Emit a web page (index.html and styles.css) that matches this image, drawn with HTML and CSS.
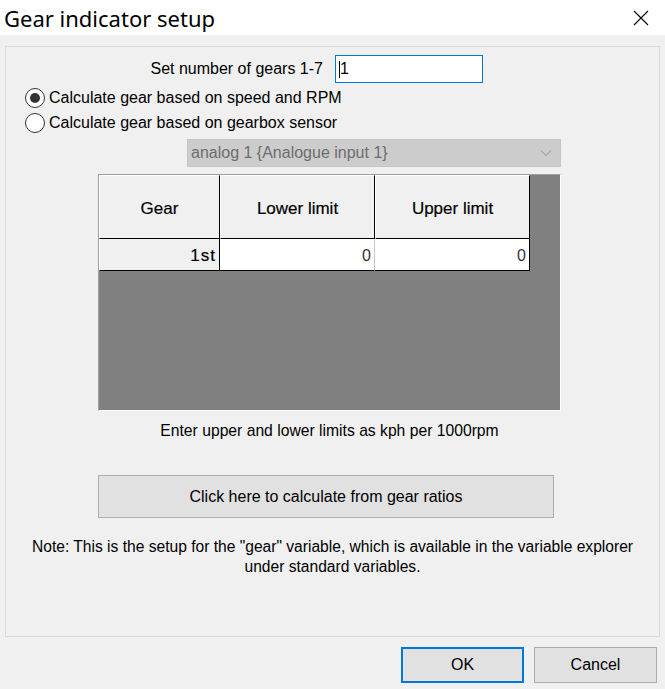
FILE: index.html
```html
<!DOCTYPE html>
<html>
<head>
<meta charset="utf-8">
<link rel="stylesheet" href="styles.css">
</head>
<body>
<div class="window">
  <div class="titlebar">
    <span class="title">Gear indicator setup</span>
    <svg class="close" width="16" height="16" viewBox="0 0 16 16"><path d="M1 1 L15 15 M15 1 L1 15" stroke="#000" stroke-width="1.1" fill="none"/></svg>
  </div>
  <div class="client">
    <div class="panel">
      <div class="gears-row">
        <span class="gears-label">Set number of gears 1-7</span>
        <div class="textbox"><span class="caret"></span>1</div>
      </div>
      <div class="radios">
        <div class="radio-row"><span class="radio checked"></span><span>Calculate gear based on speed and RPM</span></div>
        <div class="radio-row"><span class="radio"></span><span>Calculate gear based on gearbox sensor</span></div>
      </div>
      <div class="combo">
        <span>analog 1 {Analogue input 1}</span>
        <svg class="chev" width="12" height="8" viewBox="0 0 12 8"><path d="M1 1.5 L6 6.5 L11 1.5" stroke="#8f8f8f" stroke-width="1" fill="none"/></svg>
      </div>
      <div class="gridbox">
        <div class="grid">
          <div class="hcell c1">Gear</div>
          <div class="hcell c2">Lower limit</div>
          <div class="hcell c3">Upper limit</div>
          <div class="rcell c1">1st</div>
          <div class="dcell c2">0</div>
          <div class="dcell c3 last">0</div>
        </div>
      </div>
      <div class="hint">Enter upper and lower limits as kph per 1000rpm</div>
      <div class="calc-btn">Click here to calculate from gear ratios</div>
      <div class="note">Note: This is the setup for the "gear" variable, which is available in the variable explorer<br>under standard variables.</div>
    </div>
    <div class="buttons">
      <div class="btn default">OK</div>
      <div class="btn">Cancel</div>
    </div>
  </div>
</div>
</body>
</html>
```

FILE: styles.css
```css
html, body {
  margin: 0;
  padding: 0;
  background: #f0f0f0;
}
.window {
  width: 665px;
  height: 689px;
  font-family: "Liberation Sans", Arial, sans-serif;
  font-size: 16px;
  color: #000;
  overflow: hidden;
}
.titlebar {
  height: 35px;
  background: #fff;
  display: flex;
  align-items: center;
  justify-content: space-between;
  padding: 0 16px 0 4px;
}
.title {
  font-family: "Noto Sans", "Open Sans", sans-serif;
  font-size: 22px;
  color: #000;
}
.close {
  margin-top: 1px;
}
.client {
  padding: 11px 0 0 5px;
}
.panel {
  box-sizing: border-box;
  width: 655px;
  height: 591px;
  border: 1px solid #dadada;
  display: flex;
  flex-direction: column;
}
.gears-row {
  display: flex;
  align-items: center;
  margin-top: 8px;
}
.gears-label {
  width: 317px;
  text-align: right;
  margin-right: 12px;
}
.textbox {
  box-sizing: border-box;
  width: 148px;
  height: 28px;
  border: 1px solid #0078d7;
  background: #fff;
  display: flex;
  align-items: center;
  padding-left: 3px;
}
.caret {
  width: 1px;
  height: 17px;
  background: #000;
}
.radios {
  display: flex;
  flex-direction: column;
  gap: 1px;
  margin-left: 19px;
  margin-top: 3px;
}
.radio-row {
  display: flex;
  align-items: center;
  height: 24px;
}
.radio {
  box-sizing: border-box;
  width: 20px;
  height: 20px;
  border: 1px solid #333;
  border-radius: 50%;
  background: #fff;
  margin-right: 4px;
  display: flex;
  align-items: center;
  justify-content: center;
}
.radio.checked::after {
  content: "";
  width: 10px;
  height: 10px;
  border-radius: 50%;
  background: #333;
}
.combo {
  box-sizing: border-box;
  margin-left: 181px;
  margin-top: 4px;
  width: 374px;
  height: 28px;
  background: #cccccc;
  border: 1px solid #c6c6c6;
  color: #6d6d6d;
  display: flex;
  align-items: center;
  justify-content: space-between;
  padding: 0 8px 0 3px;
}
.gridbox {
  box-sizing: border-box;
  margin-left: 92px;
  margin-top: 7px;
  width: 463px;
  height: 237px;
  border: 1px solid;
  border-color: #a0a0a0 #fff #fff #a0a0a0;
  background: #808080;
}
.grid {
  display: grid;
  grid-template-columns: 121px 155px 155px;
  grid-template-rows: 64px 32px;
  width: 431px;
  font-size: 17px;
}
.hcell {
  box-sizing: border-box;
  background: #f0f0f0;
  border-top: 1px solid #fff;
  border-left: 1px solid #fff;
  border-right: 1px solid #000;
  border-bottom: 1px solid #000;
  display: flex;
  align-items: center;
  justify-content: center;
  padding-top: 4px;
  -webkit-text-stroke: 0.2px #000;
}
.rcell {
  box-sizing: border-box;
  background: #f0f0f0;
  border-left: 1px solid #fff;
  border-right: 1px solid #000;
  border-bottom: 1px solid #000;
  display: flex;
  align-items: center;
  justify-content: flex-end;
  padding-right: 3px;
  padding-top: 2px;
  letter-spacing: 1px;
  -webkit-text-stroke: 0.2px #000;
}
.dcell {
  box-sizing: border-box;
  background: #fff;
  border-right: 1px solid #c8c8c8;
  border-bottom: 1px solid #000;
  display: flex;
  align-items: center;
  justify-content: flex-end;
  padding-right: 3px;
  padding-top: 2px;
  color: #333;
  font-size: 16px;
}
.dcell.last {
  border-right-color: #000;
}
.hint {
  width: 463px;
  margin-left: 92px;
  text-align: center;
  margin-top: 11px;
  font-size: 15.7px;
}
.calc-btn {
  box-sizing: border-box;
  margin-left: 92px;
  margin-top: 35px;
  width: 456px;
  height: 43px;
  background: #e1e1e1;
  border: 1px solid #adadad;
  display: flex;
  align-items: center;
  justify-content: center;
}
.note {
  text-align: center;
  line-height: 20px;
  margin-top: 19px;
  font-size: 15.6px;
}
.buttons {
  display: flex;
  justify-content: flex-end;
  gap: 10px;
  margin-top: 10px;
  padding-right: 8px;
}
.btn {
  box-sizing: border-box;
  width: 123px;
  height: 36px;
  background: #e1e1e1;
  border: 1px solid #adadad;
  display: flex;
  align-items: center;
  justify-content: center;
  font-size: 16px;
}
.btn.default {
  border: 2px solid #0078d7;
}
```
